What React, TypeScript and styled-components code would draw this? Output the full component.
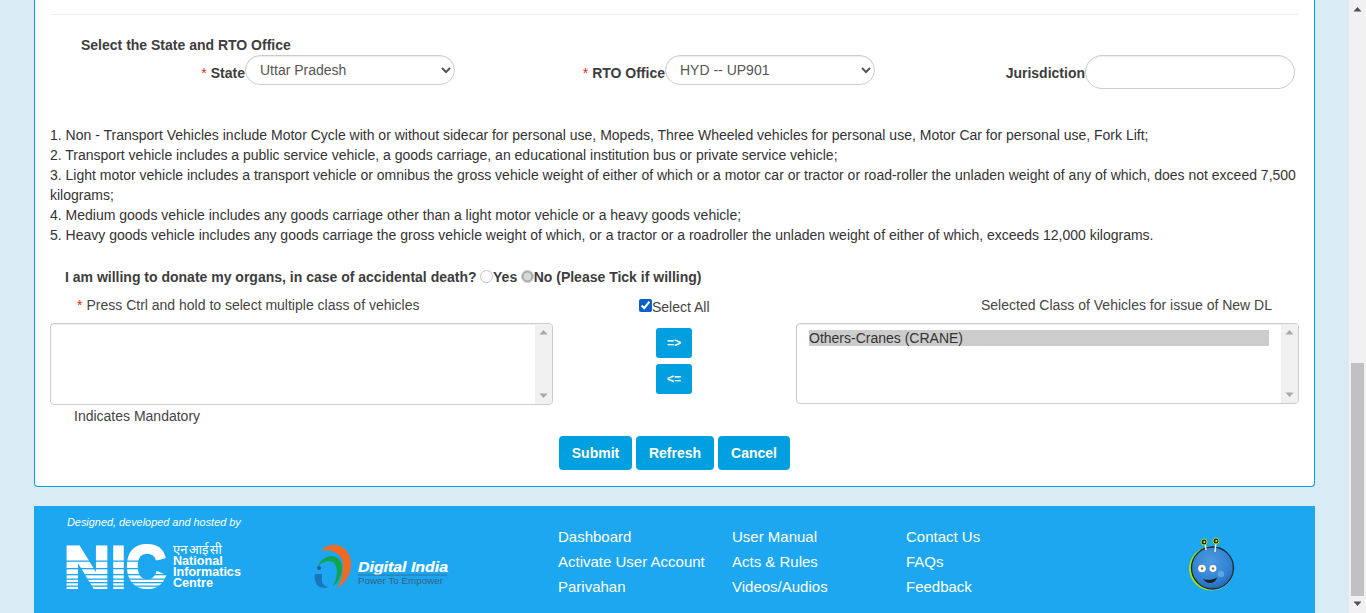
import React from "react";
import styled, { createGlobalStyle } from "styled-components";

const Global = createGlobalStyle`
  html, body { margin: 0; padding: 0; height: 613px; overflow: hidden; }
  body { font-family: "Liberation Sans", Arial, sans-serif; font-size: 14px; line-height: 20px; color: #333; background: #d9ecf6; }
  * { box-sizing: border-box; }
`;

const Screen = styled.div`
  display: flex;
  width: 1366px;
  height: 613px;
  overflow: hidden;
`;
const Page = styled.div`
  width: 1349px;
  padding: 0 34px;
  background: #d9ecf6;
`;
const Card = styled.section`
  width: 1281px;
  height: 487px;
  padding: 14px 15px 0;
  background: #fff;
  border: 1px solid #009fdf;
  border-top: 0;
  border-radius: 0 0 4px 4px;
`;
const Rule = styled.hr`
  margin: 0;
  border: 0;
  border-top: 1px solid #eee;
`;
const Heading = styled.h4`
  margin: 20px 0 0 31px;
  font-size: 14px;
  line-height: 20px;
  font-weight: 700;
  color: #3d3d3d;
`;
const FieldRow = styled.div`
  display: grid;
  grid-template-columns: repeat(3, 420px);
  margin: 0 0 0 -15px;
  height: 66px;
`;
const Field = styled.div`
  display: flex;
  justify-content: flex-end;
  align-items: flex-start;
`;
const FieldLabel = styled.label`
  margin-top: 8px;
  font-weight: 700;
  color: #3d3d3d;
  white-space: nowrap;
`;
const Star = styled.span`
  color: #e22;
  font-weight: 400;
  margin-right: 4px;
`;
const RoundSelect = styled.select`
  width: 210px;
  height: 30px;
  padding: 0 8px 0 10px;
  font: 14px/20px "Liberation Sans", Arial, sans-serif;
  color: #555;
  background-color: #fff;
  border: 1px solid #ccc;
  border-radius: 20px;
  box-shadow: inset 0 1px 1px rgba(0,0,0,.075);
`;
const RoundInput = styled.input`
  width: 210px;
  height: 34px;
  padding: 6px 12px;
  background: #fff;
  border: 1px solid #ccc;
  border-radius: 20px;
  box-shadow: inset 0 1px 1px rgba(0,0,0,.075);
`;
const Notes = styled.p`
  margin: 0;
  padding-top: 4px;
  height: 124px;
  color: #333;
`;
const OrganRow = styled.div`
  display: flex;
  align-items: center;
  margin: 22px 0 0 15px;
  height: 20px;
  font-weight: 700;
  color: #3d3d3d;
`;
const Radio = styled.input`
  width: 13px;
  height: 13px;
  margin: 0 0 1px 3.500px;
  accent-color: #aaa;
  opacity: .45;
`;
const TransferGrid = styled.div`
  display: grid;
  grid-template-columns: 503px 243px 503px;
  margin-top: 8px;
`;
const ListCaption = styled.div<{ $right?: boolean }>`
  height: 20px;
  padding-left: ${(p) => (p.$right ? "0" : "27px")};
  padding-right: ${(p) => (p.$right ? "27px" : "0")};
  text-align: ${(p) => (p.$right ? "right" : "left")};
  color: #444;
`;
const SelectAll = styled.label`
  display: flex;
  height: 22px;
  padding: 2px 0 0 86px;
  color: #444;
`;
const Check = styled.input`
  width: 13px;
  height: 13px;
  margin: 2px 0 0;
  accent-color: #0b5fc9;
`;
const ListBox = styled.div<{ $h: number }>`
  position: relative;
  height: ${(p) => p.$h}px;
  margin-top: 8px;
  padding: 6px 29px 0 12px;
  background: #fff;
  border: 1px solid #ccc;
  border-radius: 4px;
  box-shadow: inset 0 1px 1px rgba(0,0,0,.075);
  overflow: hidden;
`;
const Track = styled.div`
  position: absolute;
  top: 0;
  right: 0;
  bottom: 0;
  width: 17px;
  padding: 5px 0;
  display: flex;
  flex-direction: column;
  justify-content: space-between;
  align-items: center;
  background: #f0f0f0;
`;
const Option = styled.div`
  height: 16px;
  line-height: 16px;
  font-size: 14px;
  color: #333;
  background: #ccc;
`;
const ArrowColumn = styled.div`
  display: flex;
  flex-direction: column;
  align-items: flex-start;
  gap: 6px;
  padding: 6px 0 0 103px;
  margin-top: 5px;
`;
const SmallButton = styled.button`
  width: 36px;
  height: 30px;
  padding: 0;
  color: #fff;
  background: #009fdf;
  border: 0;
  border-radius: 3px;
  font: 700 12px/30px "Liberation Sans", Arial, sans-serif;
`;
const Mandatory = styled.div`
  margin: 1px 0 0 24px;
  height: 20px;
  color: #444;
`;
const ActionRow = styled.div`
  display: flex;
  gap: 4px;
  margin: 10px 0 0 509px;
`;
const ActionButton = styled.button<{ $w: number }>`
  width: ${(p) => p.$w}px;
  height: 34px;
  padding: 0;
  color: #fff;
  background: #009fdf;
  border: 0;
  border-radius: 4px;
  font: 700 14px/34px "Liberation Sans", Arial, sans-serif;
`;
const Footer = styled.footer`
  display: grid;
  grid-template-columns: 524px 174px 174px 270px 1fr;
  width: 1281px;
  height: 107px;
  margin-top: 19px;
  background: #1ca7f0;
`;
const Brand = styled.div`
  padding: 9px 0 0 33px;
  color: #fff;
`;
const Credit = styled.div`
  height: 14px;
  font-size: 10.9px;
  line-height: 14px;
  font-style: italic;
  white-space: nowrap;
`;
const LogoRow = styled.div`
  display: flex;
  align-items: flex-start;
  margin-top: 15px;
  height: 50px;
`;
const NicWords = styled.div`
  width: 72px;
  margin: -1px 0 0 7px;
  font-size: 12.6px;
  line-height: 11px;
  font-weight: 700;
  color: #fff;
`;
const Hindi = styled.div`
  font-family: "Noto Sans", "DejaVu Sans", sans-serif;
  font-size: 13px;
  line-height: 12px;
  height: 13px;
  font-weight: 400;
  word-spacing: -2px;
  white-space: nowrap;
`;
const DigitalSlot = styled.div`
  margin: -1px 0 0 68px;
  flex: none;
  line-height: 0;
`;
const NicSlot = styled.div`
  flex: none;
  width: 99px;
  height: 45px;
  margin-top: -12px;
  line-height: 0;
`;
const NicSvg = styled.svg`
  display: block;
  margin-left: -4px;
`;
const LinkColumn = styled.nav`
  display: flex;
  flex-direction: column;
  gap: 5px;
  padding-top: 21px;
`;
const FooterLink = styled.a`
  height: 20px;
  color: #fff;
  font-size: 15px;
  line-height: 20px;
  white-space: nowrap;
`;
const Mascot = styled.div`
  padding: 31px 0 0 10px;
`;
const Scrollbar = styled.aside`
  width: 17px;
  height: 613px;
  padding: 0 2px;
  display: flex;
  flex-direction: column;
  align-items: center;
  background: #f1f1f1;
`;
const ScrollSpacer = styled.div`
  flex: none;
  height: 363px;
  padding-top: 6px;
  line-height: 0;
`;
const Thumb = styled.div`
  width: 13px;
  height: 233px;
  background: #c1c1c1;
`;
const ScrollEnd = styled.div`
  padding-top: 5px;
  line-height: 0;
`;

const Up = ({ c = "#a8a8a8" }: { c?: string }) => (
  <svg width="9" height="6" viewBox="0 0 9 6"><path d="M4.500 1 8.500 5.500H.5Z" fill={c} /></svg>
);
const Down = ({ c = "#a8a8a8" }: { c?: string }) => (
  <svg width="9" height="6" viewBox="0 0 9 6"><path d="M.5.5h8l-4 4.500Z" fill={c} /></svg>
);

const NicMark = () => (
  <NicSvg width="107" height="72" viewBox="-4 -12 107 72">
    <g fontFamily="Liberation Sans" fontWeight="700" fontSize="60" fill="#fff" stroke="#fff" strokeWidth="3">
      <text x="-3" y="43.500" textLength="46" lengthAdjust="spacingAndGlyphs">N</text>
      <text x="44" y="43.500" textLength="15" lengthAdjust="spacingAndGlyphs">I</text>
      <text x="59" y="43" textLength="40" lengthAdjust="spacingAndGlyphs">C</text>
    </g>
    <rect x="-4" y="45" width="107" height="5" fill="#1ca7f0" />
    <rect x="-4" y="-5" width="107" height="5" fill="#1ca7f0" />
    {[16.5, 24, 30, 34.500, 38, 41.500].map((y) => (
      <rect key={y} x="-4" y={y} width="107" height="1.300" fill="#1ca7f0" />
    ))}
  </NicSvg>
);

const DigitalIndia = () => (
  <svg width="136" height="48" viewBox="0 0 136 48">
    <path d="M8 8C12 3 18 1 24 2c9 2 14 10 14 19 0 10-6 20-14 24 4-6 6-14 6-23C30 12 20 5 8 8Z" fill="#f26a21" />
    <path d="M5 24c2-7 8-11 14-11 7 1 11 7 10 14-1 7-4 13-9 16 3-5 4-11 4-16-1-6-4-9-8-9-4 0-8 2-11 6Z" fill="#0fa64b" />
    <path d="M2 31h7v7c0 3 2 5 6 6-5 2-9 0-11-2-2-3-3-7-2-11Z" fill="#1c75bc" />
    <circle cx="6" cy="25" r="2" fill="#1a5f9e" />
    <text x="45" y="29" fontFamily="Liberation Sans" fontWeight="700" fontStyle="italic" fontSize="14" fill="#fff" stroke="#fff" strokeWidth=".2" textLength="90" lengthAdjust="spacingAndGlyphs">Digital India</text>
    <path d="M45 32h89" stroke="#2f6ea0" strokeWidth=".9" />
    <text x="45" y="41" fontFamily="Liberation Sans" fontSize="9.500" fill="#3a5f80" textLength="85" lengthAdjust="spacingAndGlyphs">Power To Empower</text>
  </svg>
);

const MascotArt = () => (
  <svg width="50" height="54" viewBox="0 0 50 54">
    <defs>
      <radialGradient id="mb" cx="45%" cy="35%" r="70%">
        <stop offset="0" stopColor="#4d9be0" />
        <stop offset=".7" stopColor="#2f80d2" />
        <stop offset="1" stopColor="#1c62ae" />
      </radialGradient>
    </defs>
    <circle cx="25" cy="31.500" r="22" fill="#9ee600" />
    <circle cx="27" cy="32" r="21" fill="#8fd4ee" />
    <circle cx="26.500" cy="31" r="21" fill="url(#mb)" stroke="#1d2a2f" strokeWidth="1.300" />
    <path d="M20 13 19 6M29 15 30 5" stroke="#eee" strokeWidth="1.500" />
    <circle cx="18" cy="5" r="3" fill="#222" stroke="#9ee600" />
    <circle cx="18.300" cy="5" r="1.100" fill="#f2e85a" />
    <circle cx="30" cy="4" r="3" fill="#222" stroke="#9ee600" />
    <circle cx="30.300" cy="4" r="1.100" fill="#f2e85a" />
    <circle cx="16" cy="31.500" r="3.800" fill="#fff" />
    <circle cx="16" cy="31.500" r="1.200" fill="#7a7a18" />
    <circle cx="27" cy="31.500" r="3.400" fill="#fff" />
    <circle cx="27" cy="31.500" r="1.200" fill="#7a7a18" />
    <circle cx="35" cy="37" r="3.200" fill="#5da6e0" />
    <path d="M17 42c4 1.500 10 1 14-1.500-1 4-4 5.500-7 5.500s-6-2-7-4Z" fill="#222" />
  </svg>
);

export default function App() {
  return (
    <Screen>
      <Global />
      <Page>
        <Card>
          <Rule />
          <Heading>Select the State and RTO Office</Heading>
          <FieldRow>
            <Field>
              <FieldLabel><Star>*</Star>State</FieldLabel>
              <RoundSelect defaultValue="Uttar Pradesh"><option>Uttar Pradesh</option></RoundSelect>
            </Field>
            <Field>
              <FieldLabel><Star>*</Star>RTO Office</FieldLabel>
              <RoundSelect defaultValue="HYD -- UP901"><option>HYD -- UP901</option></RoundSelect>
            </Field>
            <Field>
              <FieldLabel>Jurisdiction</FieldLabel>
              <RoundInput />
            </Field>
          </FieldRow>
          <Notes>
            1. Non - Transport Vehicles include Motor Cycle with or without sidecar for personal use, Mopeds, Three Wheeled vehicles for personal use, Motor Car for personal use, Fork Lift;<br />
            2. Transport vehicle includes a public service vehicle, a goods carriage, an educational institution bus or private service vehicle;<br />
            3. Light motor vehicle includes a transport vehicle or omnibus the gross vehicle weight of either of which or a motor car or tractor or road-roller the unladen weight of any of which, does not exceed 7,500 kilograms;<br />
            4. Medium goods vehicle includes any goods carriage other than a light motor vehicle or a heavy goods vehicle;<br />
            5. Heavy goods vehicle includes any goods carriage the gross vehicle weight of which, or a tractor or a roadroller the unladen weight of either of which, exceeds 12,000 kilograms.
          </Notes>
          <OrganRow>
            I am willing to donate my organs, in case of accidental death?
            <Radio type="radio" name="organ" />Yes
            <Radio type="radio" name="organ" defaultChecked />No (Please Tick if willing)
          </OrganRow>
          <TransferGrid>
            <div>
              <ListCaption><Star>*</Star>Press Ctrl and hold to select multiple class of vehicles</ListCaption>
              <ListBox $h={82}>
                <Track><Up /><Down /></Track>
              </ListBox>
            </div>
            <div>
              <SelectAll><Check type="checkbox" defaultChecked />Select All</SelectAll>
              <ArrowColumn>
                <SmallButton>=&gt;</SmallButton>
                <SmallButton>&lt;=</SmallButton>
              </ArrowColumn>
            </div>
            <div>
              <ListCaption $right>Selected Class of Vehicles for issue of New DL</ListCaption>
              <ListBox $h={81}>
                <Option>Others-Cranes (CRANE)</Option>
                <Track><Up /><Down /></Track>
              </ListBox>
            </div>
          </TransferGrid>
          <Mandatory>Indicates Mandatory</Mandatory>
          <ActionRow>
            <ActionButton $w={73}>Submit</ActionButton>
            <ActionButton $w={78}>Refresh</ActionButton>
            <ActionButton $w={72}>Cancel</ActionButton>
          </ActionRow>
        </Card>
        <Footer>
          <Brand>
            <Credit>Designed, developed and hosted by</Credit>
            <LogoRow>
              <NicSlot><NicMark /></NicSlot>
              <NicWords>
                <Hindi>एन आई सी</Hindi>
                National<br />Informatics<br />Centre
              </NicWords>
              <DigitalSlot><DigitalIndia /></DigitalSlot>
            </LogoRow>
          </Brand>
          <LinkColumn>
            <FooterLink>Dashboard</FooterLink>
            <FooterLink>Activate User Account</FooterLink>
            <FooterLink>Parivahan</FooterLink>
          </LinkColumn>
          <LinkColumn>
            <FooterLink>User Manual</FooterLink>
            <FooterLink>Acts &amp; Rules</FooterLink>
            <FooterLink>Videos/Audios</FooterLink>
          </LinkColumn>
          <LinkColumn>
            <FooterLink>Contact Us</FooterLink>
            <FooterLink>FAQs</FooterLink>
            <FooterLink>Feedback</FooterLink>
          </LinkColumn>
          <Mascot><MascotArt /></Mascot>
        </Footer>
      </Page>
      <Scrollbar>
        <ScrollSpacer><Up c="#505050" /></ScrollSpacer>
        <Thumb />
        <ScrollEnd><Down c="#505050" /></ScrollEnd>
      </Scrollbar>
    </Screen>
  );
}
